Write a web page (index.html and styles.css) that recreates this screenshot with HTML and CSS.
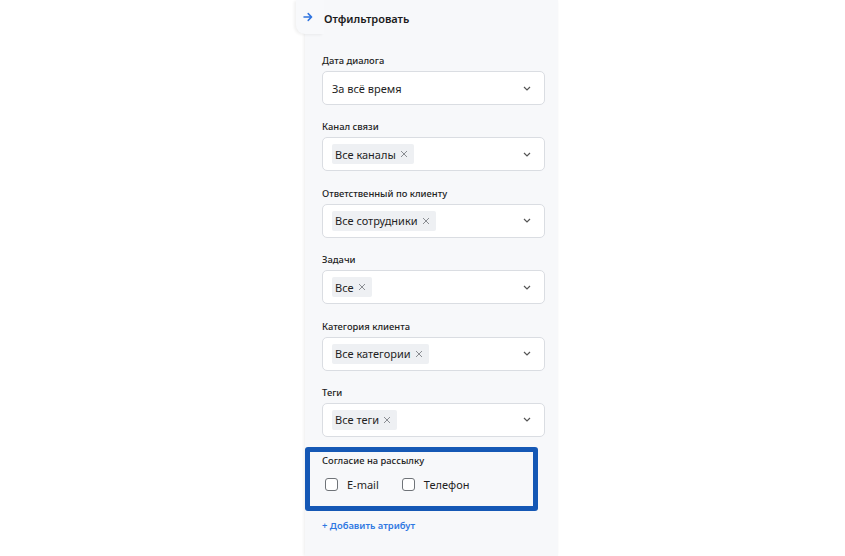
FILE: index.html
```html
<!DOCTYPE html>
<html lang="ru">
  <head>
    <meta charset="UTF-8" />
    <meta name="viewport" content="width=device-width, initial-scale=1.0" />
    <title>Отфильтровать</title>
    <link rel="stylesheet" href="styles.css">
  </head>
  <body>
    <div class="page">
      <aside class="panel">
        <div class="panel-header">
          <span class="back">
            <svg width="10" height="10" viewBox="0 0 10 10">
              <path d="M1 5h7.5M5.2 1.6 8.6 5 5.2 8.4" fill="none" stroke="#2f74e0" stroke-width="1.5" stroke-linecap="round" stroke-linejoin="round" />
            </svg>
          </span>
          <span class="title">Отфильтровать</span>
        </div>

        <div class="panel-body">
          <div class="field">
            <label>Дата диалога</label>
            <div class="select">
              <span class="value">За всё время</span>
              <svg class="chevron" width="8" height="5" viewBox="0 0 8 5"><path d="M1 1l3 3 3-3" fill="none" stroke="#555" stroke-width="1.2" /></svg>
            </div>
          </div>

          <div class="field">
            <label>Канал связи</label>
            <div class="select">
              <span class="chip">Все каналы <svg class="x" width="8" height="8" viewBox="0 0 8 8"><path d="M1 1l6 6M7 1 1 7" stroke="#8a8d92" stroke-width="1" /></svg></span>
              <svg class="chevron" width="8" height="5" viewBox="0 0 8 5"><path d="M1 1l3 3 3-3" fill="none" stroke="#555" stroke-width="1.2" /></svg>
            </div>
          </div>

          <div class="field">
            <label>Ответственный по клиенту</label>
            <div class="select">
              <span class="chip">Все сотрудники <svg class="x" width="8" height="8" viewBox="0 0 8 8"><path d="M1 1l6 6M7 1 1 7" stroke="#8a8d92" stroke-width="1" /></svg></span>
              <svg class="chevron" width="8" height="5" viewBox="0 0 8 5"><path d="M1 1l3 3 3-3" fill="none" stroke="#555" stroke-width="1.2" /></svg>
            </div>
          </div>

          <div class="field">
            <label>Задачи</label>
            <div class="select">
              <span class="chip">Все <svg class="x" width="8" height="8" viewBox="0 0 8 8"><path d="M1 1l6 6M7 1 1 7" stroke="#8a8d92" stroke-width="1" /></svg></span>
              <svg class="chevron" width="8" height="5" viewBox="0 0 8 5"><path d="M1 1l3 3 3-3" fill="none" stroke="#555" stroke-width="1.2" /></svg>
            </div>
          </div>

          <div class="field">
            <label>Категория клиента</label>
            <div class="select">
              <span class="chip">Все категории <svg class="x" width="8" height="8" viewBox="0 0 8 8"><path d="M1 1l6 6M7 1 1 7" stroke="#8a8d92" stroke-width="1" /></svg></span>
              <svg class="chevron" width="8" height="5" viewBox="0 0 8 5"><path d="M1 1l3 3 3-3" fill="none" stroke="#555" stroke-width="1.2" /></svg>
            </div>
          </div>

          <div class="field">
            <label>Теги</label>
            <div class="select">
              <span class="chip">Все теги <svg class="x" width="8" height="8" viewBox="0 0 8 8"><path d="M1 1l6 6M7 1 1 7" stroke="#8a8d92" stroke-width="1" /></svg></span>
              <svg class="chevron" width="8" height="5" viewBox="0 0 8 5"><path d="M1 1l3 3 3-3" fill="none" stroke="#555" stroke-width="1.2" /></svg>
            </div>
          </div>

          <div class="consent">
            <label>Согласие на рассылку</label>
            <div class="checks">
              <span class="check"><span class="box"></span>E-mail</span>
              <span class="check"><span class="box"></span>Телефон</span>
            </div>
          </div>

          <a class="add" href="#">+ Добавить атрибут</a>
        </div>
      </aside>
    </div>
  </body>
</html>
```

FILE: styles.css
```css
body {
  margin: 0;
  background-color: #fff;
  font-family: "Noto Sans", "Open Sans", sans-serif;
  color: #1f1f1f;
}
.page {
  display: flex;
  height: 556px;
  overflow: hidden;
}
.panel {
  margin-left: 305px;
  width: 253px;
  background-color: #f7f8fa;
  box-shadow: -1px 0 3px rgba(0, 0, 0, 0.07);
}
.panel-header {
  display: flex;
  align-items: flex-start;
  height: 40px;
}
.back {
  display: flex;
  align-items: center;
  height: 34px;
  margin-left: -9px;
  padding: 0 11px 0 7px;
  background-color: #f8f9fb;
  border-bottom-left-radius: 9px;
  box-shadow: -2px 1px 3px rgba(0, 0, 0, 0.06);
}
.title {
  line-height: 40px;
  margin-top: -1px;
  font-size: 11px;
  font-weight: 600;
  color: #1b1b1b;
}
.panel-body {
  padding: 14px 13px 0 17px;
}
.field {
  margin-bottom: 15.4px;
}
label {
  display: block;
  height: 14px;
  line-height: 14px;
  margin-bottom: 3px;
  font-size: 9.4px;
  font-weight: 500;
  color: #222;
}
.select {
  display: flex;
  align-items: center;
  height: 34px;
  padding: 0 9px;
  box-sizing: border-box;
  background-color: #fff;
  border: 1px solid #dadde2;
  border-radius: 5px;
}
.value {
  font-size: 11px;
  color: #1f1f1f;
}
.chip {
  display: inline-flex;
  align-items: center;
  height: 20px;
  padding: 0 6px 0 3px;
  background-color: #eef0f3;
  border-radius: 2px;
  font-size: 11px;
  color: #1f1f1f;
}
.x {
  margin-left: 4px;
}
.chevron {
  margin-left: auto;
  margin-right: 4px;
}
.consent {
  margin: -5.4px 7px 0 -17px;
  padding: 2px 0 13px 12px;
  border: 5px solid #1558b5;
  border-radius: 3px;
}
.checks {
  display: flex;
  align-items: center;
  height: 16px;
  margin-top: 9px;
  font-size: 11px;
  color: #1f1f1f;
}
.check {
  display: flex;
  align-items: center;
  margin-right: 20px;
}
.box {
  width: 11px;
  height: 11px;
  margin: 0 9px 0 3px;
  border: 1px solid #6f7378;
  border-radius: 3px;
  background-color: #fff;
}
.add {
  display: block;
  margin-top: 8px;
  line-height: 14px;
  font-size: 9.4px;
  font-weight: 600;
  color: #2f78e2;
  text-decoration: none;
}
```
